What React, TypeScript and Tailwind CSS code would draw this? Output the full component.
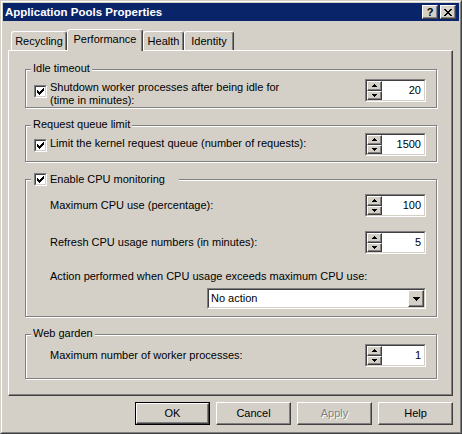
import React from "react";

const FONT = { fontFamily: "'Liberation Sans', Arial, sans-serif" };

function UpArrow() {
  return (
    <svg width="5" height="3" viewBox="0 0 5 3" shapeRendering="crispEdges">
      <rect x="2" y="0" width="1" height="1" fill="#000" />
      <rect x="1" y="1" width="3" height="1" fill="#000" />
      <rect x="0" y="2" width="5" height="1" fill="#000" />
    </svg>
  );
}

function DownArrow({ big = false }: { big?: boolean }) {
  if (big) {
    return (
      <svg width="7" height="4" viewBox="0 0 7 4" shapeRendering="crispEdges">
        <rect x="0" y="0" width="7" height="1" fill="#000" />
        <rect x="1" y="1" width="5" height="1" fill="#000" />
        <rect x="2" y="2" width="3" height="1" fill="#000" />
        <rect x="3" y="3" width="1" height="1" fill="#000" />
      </svg>
    );
  }
  return (
    <svg width="5" height="3" viewBox="0 0 5 3" shapeRendering="crispEdges">
      <rect x="0" y="0" width="5" height="1" fill="#000" />
      <rect x="1" y="1" width="3" height="1" fill="#000" />
      <rect x="2" y="2" width="1" height="1" fill="#000" />
    </svg>
  );
}

function Check() {
  const cols = [2, 3, 4, 3, 2, 1, 0];
  return (
    <svg width="7" height="7" viewBox="0 0 7 7" shapeRendering="crispEdges">
      {cols.map((y, x) => (
        <rect key={x} x={x} y={y} width="1" height="3" fill="#000" />
      ))}
    </svg>
  );
}

function Checkbox() {
  return (
    <div className="h-[13px] w-[13px] shrink-0 border border-t-[#808080] border-l-[#808080] border-b-white border-r-white">
      <div className="flex h-full w-full items-center justify-center border border-t-[#404040] border-l-[#404040] border-b-[#d4d0c8] border-r-[#d4d0c8] bg-white">
        <Check />
      </div>
    </div>
  );
}

function Spinner({ value }: { value: string }) {
  return (
    <div className="flex h-[23px] w-[61px] shrink-0 border border-t-[#808080] border-l-[#808080] border-b-white border-r-white">
      <div className="flex flex-1 border border-t-[#404040] border-l-[#404040] border-b-[#d4d0c8] border-r-[#d4d0c8]">
        <div className="flex w-[15px] flex-col">
          <div className="flex flex-1 items-center justify-center border border-t-white border-l-white border-b-[#404040] border-r-[#404040] bg-[#d4d0c8] shadow-[inset_-1px_-1px_0_#808080]">
            <UpArrow />
          </div>
          <div className="flex flex-1 items-center justify-center border border-t-white border-l-white border-b-[#404040] border-r-[#404040] bg-[#d4d0c8] shadow-[inset_-1px_-1px_0_#808080]">
            <DownArrow />
          </div>
        </div>
        <div className="flex flex-1 items-center justify-end bg-white pr-[3px] text-[11px] leading-[13px] text-black">
          {value}
        </div>
      </div>
    </div>
  );
}

function Tab({ label, w, selected = false }: { label: string; w: string; selected?: boolean }) {
  if (selected) {
    return (
      <div
        className={
          "relative z-10 -mb-px flex h-[22px] items-center justify-center rounded-t-[3px] border-t border-l border-r border-t-white border-l-white border-r-[#404040] bg-[#d4d0c8] pb-[2px] shadow-[inset_-1px_0_0_#808080] " +
          w
        }
      >
        {label}
      </div>
    );
  }
  return (
    <div
      className={
        "flex h-[19px] items-center justify-center rounded-t-[3px] border-t border-l border-r border-t-white border-l-white border-r-[#404040] bg-[#d4d0c8] shadow-[inset_-1px_0_0_#808080] " +
        w
      }
    >
      {label}
    </div>
  );
}

function Button({ label, def = false, disabled = false }: { label: string; def?: boolean; disabled?: boolean }) {
  const inner = (
    <div className="flex h-full w-full items-center justify-center border border-t-white border-l-white border-b-[#404040] border-r-[#404040] shadow-[inset_-1px_-1px_0_#808080]">
      <span className={disabled ? "text-[#808080] [text-shadow:1px_1px_0_#fff]" : "text-black"}>{label}</span>
    </div>
  );
  if (def) {
    return <div className="h-[23px] w-[75px] border border-black">{inner}</div>;
  }
  return <div className="h-[23px] w-[75px]">{inner}</div>;
}

export default function App() {
  return (
    <div
      style={FONT}
      className="h-[434px] w-[462px] overflow-hidden border border-t-[#d4d0c8] border-l-[#d4d0c8] border-b-[#404040] border-r-[#404040] bg-[#d4d0c8] text-[11px] leading-[13px] text-black"
    >
      <div className="flex h-full flex-col border border-t-white border-l-white border-b-[#808080] border-r-[#808080] p-[1px]">
        {/* Title bar */}
        <div className="flex h-[18px] shrink-0 items-center bg-[#0a246a] pl-[2px] pr-[3px]">
          <span className="text-[11.5px] font-bold text-white">Application Pools Properties</span>
          <div className="ml-auto flex gap-[2px]">
            <div className="flex h-[14px] w-[16px] items-center justify-center border border-t-white border-l-white border-b-[#404040] border-r-[#404040] bg-[#d4d0c8] shadow-[inset_-1px_-1px_0_#808080]">
              <span className="text-[11px] font-bold leading-[11px] text-black">?</span>
            </div>
            <div className="flex h-[14px] w-[16px] items-center justify-center border border-t-white border-l-white border-b-[#404040] border-r-[#404040] bg-[#d4d0c8] shadow-[inset_-1px_-1px_0_#808080]">
              <svg width="8" height="7" viewBox="0 0 8 7" shapeRendering="crispEdges">
                <rect x="0" y="0" width="2" height="1" fill="#000" />
                <rect x="6" y="0" width="2" height="1" fill="#000" />
                <rect x="1" y="1" width="2" height="1" fill="#000" />
                <rect x="5" y="1" width="2" height="1" fill="#000" />
                <rect x="2" y="2" width="4" height="1" fill="#000" />
                <rect x="3" y="3" width="2" height="1" fill="#000" />
                <rect x="2" y="4" width="4" height="1" fill="#000" />
                <rect x="1" y="5" width="2" height="1" fill="#000" />
                <rect x="5" y="5" width="2" height="1" fill="#000" />
                <rect x="0" y="6" width="2" height="1" fill="#000" />
                <rect x="6" y="6" width="2" height="1" fill="#000" />
              </svg>
            </div>
          </div>
        </div>

        {/* Body */}
        <div className="flex flex-col pl-[5px] pr-[6px] pt-[8px]">
          {/* Tabs */}
          <div className="flex h-[21px] items-end pl-[3px]">
            <Tab label="Recycling" w="w-[56px]" />
            <Tab label="Performance" w="w-[76px]" selected />
            <Tab label="Health" w="w-[41px]" />
            <Tab label="Identity" w="w-[50px]" />
          </div>

          {/* Panel */}
          <div className="flex h-[346px] w-[445px] flex-col gap-[17px] border border-t-white border-l-white border-b-[#404040] border-r-[#404040] pl-[16px] pt-[18px] shadow-[inset_-1px_-1px_0_#808080]">
            {/* Idle timeout */}
            <div className="relative flex h-[39px] w-[412px] items-start border border-[#808080] pl-[8px] pr-[10px] pt-[9px] shadow-[inset_1px_1px_0_#fff,1px_1px_0_#fff]">
              <span className="absolute left-[5px] top-[-8px] bg-[#d4d0c8] px-[2px]">Idle timeout</span>
              <div className="mt-[6px]">
                <Checkbox />
              </div>
              <div className="ml-[3px] mt-[2px]">
                Shutdown worker processes after being idle for
                <br />
                (time in minutes):
              </div>
              <div className="ml-auto">
                <Spinner value="20" />
              </div>
            </div>

            {/* Request queue limit */}
            <div className="relative flex h-[37px] w-[412px] items-start border border-[#808080] pl-[8px] pr-[10px] pt-[7px] shadow-[inset_1px_1px_0_#fff,1px_1px_0_#fff]">
              <span className="absolute left-[5px] top-[-8px] bg-[#d4d0c8] px-[2px]">Request queue limit</span>
              <div className="mt-[6px]">
                <Checkbox />
              </div>
              <div className="ml-[3px] mt-[4px]">Limit the kernel request queue (number of requests):</div>
              <div className="ml-auto">
                <Spinner value="1500" />
              </div>
            </div>

            {/* CPU monitoring */}
            <div className="relative flex h-[138px] w-[412px] flex-col border border-[#808080] pl-[24px] pr-[10px] pt-[14px] shadow-[inset_1px_1px_0_#fff,1px_1px_0_#fff]">
              <div className="absolute left-[5px] top-[-7px] flex items-center bg-[#d4d0c8] pl-[3px] pr-[14px]">
                <Checkbox />
                <span className="ml-[3px]">Enable CPU monitoring</span>
              </div>
              <div className="flex items-center justify-between">
                <span>Maximum CPU use (percentage):</span>
                <Spinner value="100" />
              </div>
              <div className="mt-[14px] flex items-center justify-between">
                <span>Refresh CPU usage numbers (in minutes):</span>
                <Spinner value="5" />
              </div>
              <div className="mt-[16px]">Action performed when CPU usage exceeds maximum CPU use:</div>
              <div className="mt-[5px] flex h-[21px] w-[219px] self-end border border-t-[#808080] border-l-[#808080] border-b-white border-r-white">
                <div className="flex flex-1 border border-t-[#404040] border-l-[#404040] border-b-[#d4d0c8] border-r-[#d4d0c8] bg-white">
                  <div className="flex flex-1 items-center pl-[2px]">No action</div>
                  <div className="flex w-[16px] items-center justify-center border border-t-white border-l-white border-b-[#404040] border-r-[#404040] bg-[#d4d0c8] shadow-[inset_-1px_-1px_0_#808080]">
                    <DownArrow big />
                  </div>
                </div>
              </div>
            </div>

            {/* Web garden */}
            <div className="relative flex h-[45px] w-[412px] items-start border border-[#808080] pl-[24px] pr-[10px] pt-[9px] shadow-[inset_1px_1px_0_#fff,1px_1px_0_#fff]">
              <span className="absolute left-[5px] top-[-8px] bg-[#d4d0c8] px-[2px]">Web garden</span>
              <div className="flex flex-1 items-center justify-between">
                <span>Maximum number of worker processes:</span>
                <Spinner value="1" />
              </div>
            </div>
          </div>

          {/* Buttons */}
          <div className="mt-[6px] flex justify-end gap-[6px]">
            <Button label="OK" def />
            <Button label="Cancel" />
            <Button label="Apply" disabled />
            <Button label="Help" />
          </div>
        </div>
      </div>
    </div>
  );
}
